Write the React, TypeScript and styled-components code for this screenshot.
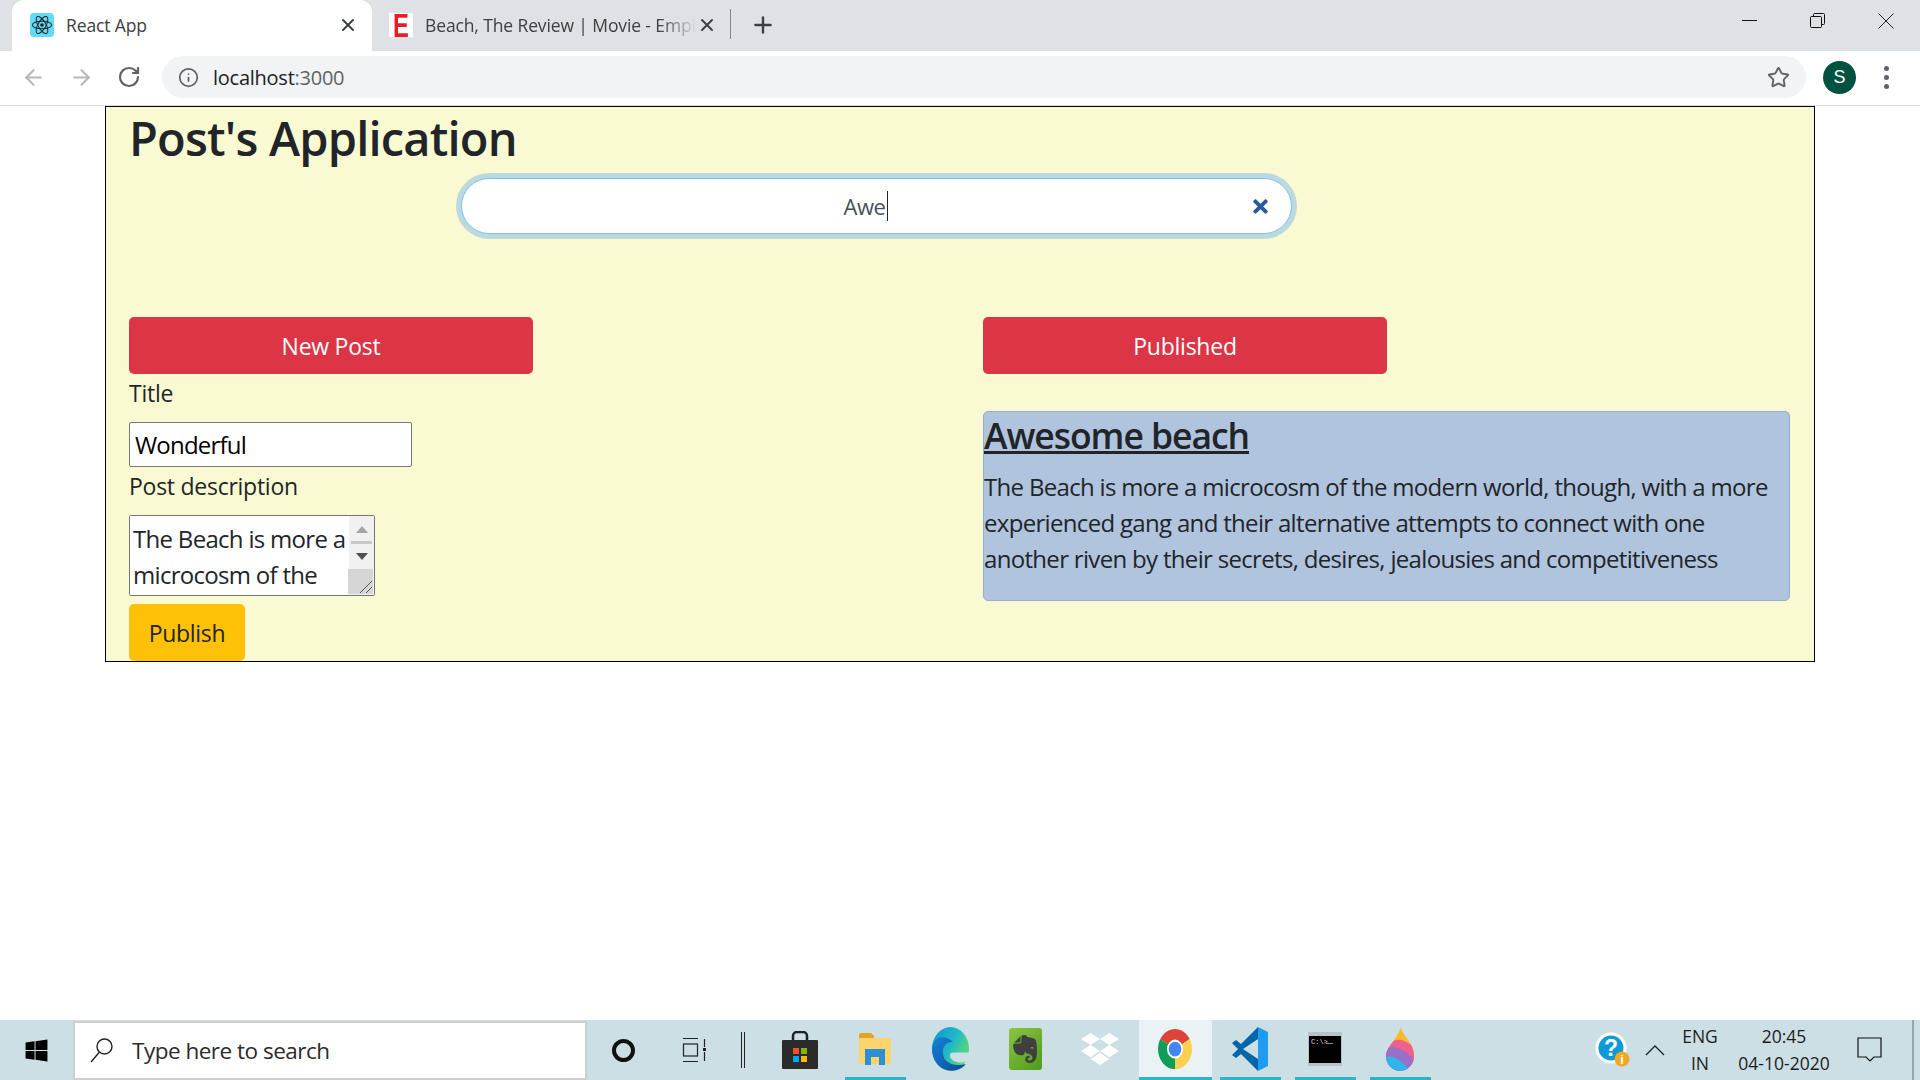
import React from "react";
import styled, {createGlobalStyle} from "styled-components";
import {ArrowLeft, ArrowRight, RotateCw, Info, Star, X, Plus} from "lucide-react";
import {FaWindows, FaTimes, FaDropbox, FaEvernote} from "react-icons/fa";

const GlobalStyle = createGlobalStyle`
  html, body {
    margin: 0;
    padding: 0;
    background: #fff;
    font-family: "Open Sans", "Noto Sans", sans-serif;
    color: #212529;
  }
  * {
    box-sizing: border-box;
  }
`;

const Screen = styled.div`
  width: 1920px;
  height: 1080px;
  display: flex;
  flex-direction: column;
  overflow: hidden;
`;

/* browser chrome */
const TabStrip = styled.div`
  height: 51px;
  flex: none;
  background: #dee1e6;
  display: flex;
  align-items: stretch;
  padding-left: 12px;
`;

const ActiveTab = styled.div`
  width: 360px;
  background: #fff;
  border-radius: 12px 12px 0 0;
  display: flex;
  align-items: center;
  padding: 0 14px 2px 18px;
`;

const BackTab = styled.div`
  width: 358px;
  display: flex;
  align-items: center;
  padding: 0 13px 2px 17px;
`;

const ReactFavicon = styled.div`
  width: 24px;
  height: 24px;
  flex: none;
  border-radius: 4px;
  background: #61dafb;
  display: flex;
  align-items: center;
  justify-content: center;
`;

const EmpireFavicon = styled.div`
  width: 24px;
  height: 24px;
  flex: none;
  background: #fff;
  color: #ed1c24;
  font: 700 33px/25px "Liberation Sans", sans-serif;
  text-align: center;

  span {
    display: block;
    transform: scaleX(0.72);
  }
`;

const TabTitle = styled.div<{$fade?: boolean}>`
  flex: 1;
  min-width: 0;
  margin-left: 12px;
  font-size: 17.500px;
  letter-spacing: -0.12px;
  white-space: nowrap;
  overflow: hidden;
  color: #3c4043;
  ${p => p.$fade && `mask-image: linear-gradient(to right, #000 86%, transparent 100%);`}
`;

const TabClose = styled(X)`
  flex: none;
  color: #3c4043;
`;

const TabDivider = styled.div`
  width: 1px;
  height: 30px;
  margin: 9px 0 0 0;
  background: #80868b;
`;

const NewTab = styled.div`
  width: 64px;
  display: flex;
  align-items: center;
  justify-content: center;
  color: #3c4043;
  padding-bottom: 2px;
`;

const WindowControls = styled.div`
  margin-left: auto;
  display: flex;
`;

const WindowButton = styled.div`
  width: 68px;
  display: flex;
  align-items: flex-start;
  justify-content: center;
  padding-top: 13px;
`;

const Toolbar = styled.div`
  height: 55px;
  flex: none;
  background: #fff;
  border-bottom: 1px solid #dadce0;
  display: flex;
  align-items: center;
  padding: 0 0 2px 9px;
`;

const NavButton = styled.div<{$dim?: boolean}>`
  width: 48px;
  display: flex;
  justify-content: center;
  color: ${p => (p.$dim ? "#b5b8bc" : "#5f6368")};
`;

const AddressBar = styled.div`
  width: 1644px;
  height: 42px;
  margin-left: 9px;
  border-radius: 21px;
  background: #f1f3f4;
  display: flex;
  align-items: center;
  padding: 0 16px 0 16px;
  color: #5f6368;
`;

const Url = styled.span`
  margin-left: 14px;
  font-size: 20px;
  letter-spacing: -0.25px;
  color: #202124;

  span {
    color: #5f6368;
  }
`;

const StarIcon = styled(Star)`
  margin-left: auto;
`;

const Avatar = styled.div`
  width: 33px;
  height: 33px;
  margin-left: 17px;
  border-radius: 50%;
  background: #00513f;
  color: #fff;
  font: 18px/33px "Liberation Sans", sans-serif;
  text-align: center;
`;

const MenuDots = styled.div`
  margin-left: 28px;
  display: flex;
  flex-direction: column;
  gap: 4px;

  i {
    width: 5px;
    height: 5px;
    border-radius: 50%;
    background: #5f6368;
  }
`;

/* the page itself */
const Main = styled.main`
  flex: 1;
  min-height: 0;
  padding: 0 105px;
`;

const AppBox = styled.div`
  height: 556px;
  background: #fafad2;
  border: 1px solid #000;
  padding: 0 19px 0 23px;
`;

const Heading = styled.h1`
  margin: 0;
  padding-top: 2px;
  font-size: 47px;
  line-height: 59px;
  font-weight: 600;
  letter-spacing: -0.8px;
`;

const SearchBox = styled.div`
  width: 831px;
  height: 56px;
  margin: 10px 0 0 332px;
  padding: 0 20px 0 0;
  background: #fff;
  border: 1px solid #80bdff;
  border-radius: 28px;
  box-shadow: 0 0 0 5px rgba(0, 123, 255, 0.25);
  display: flex;
  align-items: center;
`;

const SearchValue = styled.div`
  flex: 1;
  text-align: center;
  padding-left: 19px;
  font-size: 22px;
  letter-spacing: -0.4px;
  color: #495057;

  span {
    padding-right: 1px;
    border-right: 1px solid #212529;
  }
`;

const ClearIcon = styled(FaTimes)`
  color: #2a5a9b;
  font-size: 21px;
`;

const Columns = styled.div`
  display: grid;
  grid-template-columns: 854px 807px;
  margin-top: 83px;
`;

const Column = styled.section`
  display: flex;
  flex-direction: column;
  align-items: flex-start;
`;

const SectionButton = styled.button`
  width: 404px;
  height: 57px;
  border: 0;
  border-radius: 5px;
  background: #dc3545;
  color: #fff;
  font: inherit;
  font-size: 23px;
  letter-spacing: -0.25px;
`;

const FieldLabel = styled.label`
  font-size: 23px;
  line-height: 36px;
  letter-spacing: -0.26px;
`;

const TitleLabel = styled(FieldLabel)`
  margin-top: 1px;
`;

const TitleInput = styled.input`
  width: 283px;
  height: 45px;
  margin-top: 11px;
  padding: 0 5px;
  border: 1px solid #767676;
  border-radius: 2px;
  background: #fff;
  color: #000;
  font: inherit;
  font-size: 24px;
  letter-spacing: -0.8px;
  outline: none;
`;

const DescLabel = styled(FieldLabel)`
  margin-top: 1px;
`;

const DescBox = styled.div`
  width: 246px;
  height: 81px;
  margin-top: 11px;
  border: 1px solid #767676;
  border-radius: 2px;
  background: #fff;
  display: flex;
  overflow: hidden;
`;

const DescText = styled.textarea`
  flex: 1;
  min-width: 0;
  padding: 5px 0 0 3px;
  border: 0;
  outline: none;
  resize: none;
  overflow: hidden;
  font: inherit;
  font-size: 24px;
  line-height: 36px;
  letter-spacing: -0.7px;
  color: #212529;
`;

const FakeScroll = styled.div`
  width: 25px;
  flex: none;
  background: #f1f1f1;
  display: flex;
  flex-direction: column;
  align-items: center;
  padding-top: 10px;
  position: relative;
`;

const ArrowUp = styled.i`
  border: 6px solid transparent;
  border-top: 0;
  border-bottom: 7px solid #a3a3a3;
`;

const ArrowDown = styled.i`
  margin-top: 9px;
  border: 6px solid transparent;
  border-bottom: 0;
  border-top: 7px solid #505050;
`;

const ScrollRail = styled.i`
  width: 21px;
  height: 3px;
  margin-top: 8px;
  background: #c8c8c8;
`;

const ResizeGrip = styled.div`
  position: absolute;
  right: 1px;
  bottom: 1px;
  width: 25px;
  height: 25px;
  background: #d6d6d6;
  display: flex;
  align-items: flex-end;
  justify-content: flex-end;
`;

const PublishButton = styled.button`
  width: 116px;
  height: 57px;
  margin-top: 8px;
  border: 0;
  border-radius: 5px;
  background: #ffc107;
  color: #212529;
  font: inherit;
  font-size: 23px;
  letter-spacing: -0.3px;
`;

const PostCard = styled.article`
  width: 807px;
  height: 190px;
  margin-top: 37px;
  border: 1px solid #98afcd;
  border-radius: 5px;
  background: #b0c4de;
`;

const PostTitle = styled.h2`
  margin: 0;
  font-size: 35.500px;
  line-height: 47px;
  font-weight: 600;
  letter-spacing: -1.05px;
  text-decoration: underline;
`;

const PostBody = styled.p`
  margin: 10px 0 0;
  font-size: 24px;
  line-height: 36px;
  letter-spacing: -0.68px;
`;

/* windows taskbar */
const Taskbar = styled.footer`
  height: 60px;
  flex: none;
  background: #cbdfe5;
  display: flex;
  align-items: stretch;
`;

const StartSlot = styled.div`
  width: 73px;
  display: flex;
  align-items: center;
  justify-content: center;
  font-size: 25px;
  color: #000;
`;

const SearchField = styled.div`
  width: 514px;
  margin-top: 1px;
  background: #fff;
  border: 2px solid #cfcfcf;
  display: flex;
  align-items: center;
  padding: 0 0 0 15px;
  font-size: 22.500px;
  letter-spacing: -0.5px;
  color: #2b2b2b;
`;

const SearchGlass = styled.svg`
  margin-right: 19px;
  flex: none;
`;

const Slot = styled.div<{$w: number}>`
  width: ${p => p.$w}px;
  flex: none;
  display: flex;
  align-items: center;
  justify-content: center;
`;

const CortanaRing = styled.div`
  width: 23px;
  height: 23px;
  border: 4px solid #111;
  border-radius: 50%;
`;

const DoubleRule = styled.div`
  width: 4px;
  height: 36px;
  border-left: 1px solid #222;
  border-right: 1px solid #222;
`;

const AppRow = styled.div`
  display: flex;
  gap: 14px;
`;

const AppSlot = styled.div<{$running?: boolean; $active?: boolean}>`
  width: ${p => (p.$active ? "73px" : "61px")};
  margin: ${p => (p.$active ? "0 -6px" : "0")};
  background: ${p => (p.$active ? "#e9f2f5" : "transparent")};
  border-bottom: 3px solid ${p => (p.$running ? "#29b3cc" : "transparent")};
  display: flex;
  align-items: center;
  justify-content: center;
  padding-right: 1px;
`;

const Evernote = styled.div`
  width: 33px;
  height: 42px;
  border-radius: 3px;
  background: linear-gradient(135deg, #8cc63f, #4f9a1e);
  display: flex;
  align-items: center;
  justify-content: center;
  color: #3f3f3f;
  font-size: 32px;
`;

const Tray = styled.div`
  margin-left: auto;
  display: flex;
  padding-right: 6px;
`;

const TrayText = styled.div`
  display: flex;
  flex-direction: column;
  align-items: center;
  justify-content: center;
  font-size: 17.500px;
  line-height: 27px;
  color: #1c1c1c;
`;

const TrayEdge = styled.div`
  width: 2px;
  background: #9aa5a9;
  margin-left: 15px;
`;

function ReactIcon() {
    return (
        <svg width="22" height="22" viewBox="-12 -12 24 24" fill="none" stroke="#222" strokeWidth="1.1">
            <circle r="2" fill="#222" stroke="none"/>
            <ellipse rx="10.5" ry="4.2"/>
            <ellipse rx="10.5" ry="4.2" transform="rotate(60)"/>
            <ellipse rx="10.5" ry="4.2" transform="rotate(120)"/>
        </svg>
    );
}

function MinimizeIcon() {
    return <svg width="16" height="16" viewBox="0 0 16 16"><path d="M0 7.5h15" stroke="#111" fill="none"/></svg>;
}

function RestoreIcon() {
    return (
        <svg width="16" height="16" viewBox="0 0 16 16" fill="none" stroke="#111">
            <rect x="0.5" y="3.5" width="11" height="11" rx="1"/>
            <path d="M3.5 3V1.5a1 1 0 0 1 1-1h9a1 1 0 0 1 1 1v9a1 1 0 0 1-1 1H12"/>
        </svg>
    );
}

function CloseIcon() {
    return <svg width="16" height="16" viewBox="0 0 16 16"><path d="M.5.5l15 15M15.5.5l-15 15" stroke="#222" fill="none"/></svg>;
}

function GripLines() {
    return <svg width="14" height="14" viewBox="0 0 14 14"><path d="M1 13L13 1M7 13l6-6" stroke="#555" fill="none"/></svg>;
}

function TaskViewIcon() {
    return (
        <svg width="27" height="26" viewBox="0 0 27 26" fill="none" stroke="#222" strokeWidth="1.2">
            <path d="M1 1.5h15M1 24.500h15"/>
            <rect x="1.5" y="7" width="14" height="12"/>
            <path d="M22.500 2v8M22.500 15v9"/>
            <rect x="21" y="11" width="3" height="3" fill="#222" stroke="none"/>
        </svg>
    );
}

function StoreIcon() {
    return (
        <svg width="36" height="38" viewBox="0 0 36 38">
            <path d="M11 9V5a4 4 0 0 1 4-4h6a4 4 0 0 1 4 4v4" fill="none" stroke="#222" strokeWidth="2.5"/>
            <rect x="0" y="9" width="36" height="29" rx="1" fill="#2b2b2b"/>
            <rect x="11" y="17" width="6" height="6" fill="#f25022"/>
            <rect x="19" y="17" width="6" height="6" fill="#7fba00"/>
            <rect x="11" y="25" width="6" height="6" fill="#00a4ef"/>
            <rect x="19" y="25" width="6" height="6" fill="#ffb900"/>
        </svg>
    );
}

function FilesIcon() {
    return (
        <svg width="32" height="32" viewBox="0 0 32 32">
            <path d="M0 2a2 2 0 0 1 2-2h10l3 3v3H0z" fill="#e0a526"/>
            <rect x="0" y="5" width="32" height="26" rx="2" fill="#fbd56b"/>
            <path d="M6 16h20v16h-6v-8h-8v8H6z" fill="#2d8fd5"/>
        </svg>
    );
}

function EdgeIcon() {
    return (
        <svg width="37" height="44" viewBox="0 0 37 44">
            <defs>
                <linearGradient id="edgeTop" x1="0" y1="0" x2="1" y2="0.6">
                    <stop offset="0" stopColor="#1a8fd0"/>
                    <stop offset="0.55" stopColor="#1fb8c8"/>
                    <stop offset="1" stopColor="#5fdc70"/>
                </linearGradient>
                <linearGradient id="edgeLow" x1="0" y1="0" x2="1" y2="1">
                    <stop offset="0" stopColor="#1382d6"/>
                    <stop offset="1" stopColor="#0b4c98"/>
                </linearGradient>
            </defs>
            <ellipse cx="18.500" cy="22" rx="18.500" ry="22" fill="url(#edgeTop)"/>
            <path d="M37 25.500H21c-3 0-4 3-2 6 3 4 10 5 15 3l3-2z" fill="#cbdfe5"/>
            <path d="M0 22C1 9 13 7 21 15c-7-1-11 5-10 12 1 9 11 13 23 10-5 6-12 8-19 6C6 41 0 32 0 22z" fill="url(#edgeLow)"/>
        </svg>
    );
}

function ChromeIcon() {
    return (
        <svg width="34" height="40" viewBox="0 0 34 40">
            <g transform="scale(1 1.18)">
                <path d="M17 17L2.300 8.500A17 17 0 0 1 31.700 8.500z" fill="#db4437"/>
                <path d="M17 17L31.700 8.500A17 17 0 0 1 17 34z" fill="#fcd04f"/>
                <path d="M17 17L17 34A17 17 0 0 1 2.300 8.500z" fill="#0f9d58"/>
                <circle cx="17" cy="17" r="8" fill="#fff"/>
                <circle cx="17" cy="17" r="6.300" fill="#4285f4"/>
            </g>
        </svg>
    );
}

function VscodeIcon() {
    return (
        <svg width="36" height="44" viewBox="0 0 36 44">
            <path d="M26 0l10 5v34l-10 5z" fill="#1f9cf0"/>
            <path d="M26 0v12L11 22l15 10v12L9 27l-5 4-4-3 6-6-6-6 4-3 5 4z" fill="#0065a9"/>
        </svg>
    );
}

function TerminalIcon() {
    return (
        <svg width="34" height="34" viewBox="0 0 34 34">
            <rect width="34" height="34" fill="#b9c2c6"/>
            <rect x="1" y="4" width="32" height="27" fill="#000"/>
            <text x="3" y="12" fontFamily="Liberation Mono" fontSize="7" fill="#ddd">C:\&gt;</text>
            <path d="M18 11.500h7" stroke="#888" fill="none"/>
        </svg>
    );
}

function PaintIcon() {
    return (
        <svg width="28" height="44" viewBox="0 0 28 44">
            <defs>
                <clipPath id="drop">
                    <path d="M15 0c1 9 13 15 13 29a14 15 0 0 1-28 0C0 20 10 14 15 0z"/>
                </clipPath>
            </defs>
            <g clipPath="url(#drop)">
                <rect width="28" height="44" fill="#fdb827"/>
                <path d="M0 22C8 8 18 12 28 20v24H0z" fill="#ef5f8f"/>
                <path d="M0 22C8 17 18 22 28 33v11H0z" fill="#9a6fc9"/>
                <path d="M0 30C8 28 16 34 24 44H0z" fill="#2fb4ec"/>
            </g>
        </svg>
    );
}

function HelpIcon() {
    return (
        <svg width="36" height="36" viewBox="0 0 36 36">
            <circle cx="16" cy="16" r="15.500" fill="#fff"/>
            <circle cx="16" cy="16" r="12.500" fill="#0d9ad8"/>
            <text x="16" y="24" textAnchor="middle" fontFamily="Liberation Sans" fontWeight="700" fontSize="23" fill="#fff">?</text>
            <circle cx="27" cy="27" r="7.500" fill="#f5a623"/>
            <text x="27" y="32" textAnchor="middle" fontFamily="Liberation Sans" fontWeight="700" fontSize="13" fill="#fff">i</text>
        </svg>
    );
}

function ChevronIcon() {
    return <svg width="20" height="11" viewBox="0 0 20 11"><path d="M1 10l9-9 9 9" stroke="#222" strokeWidth="1.300" fill="none"/></svg>;
}

function NotificationIcon() {
    return <svg width="26" height="26" viewBox="0 0 26 26"><path d="M1 1h23v19h-7l-4 4-4-4H1z" stroke="#111" strokeWidth="1.200" fill="none"/></svg>;
}

const description = "The Beach is more a microcosm of the modern world, though, with a more experienced gang and their alternative attempts to connect with one another riven by their secrets, desires, jealousies and competitiveness";

export default function App() {
    return (
        <Screen>
            <GlobalStyle/>
            <TabStrip>
                <ActiveTab>
                    <ReactFavicon><ReactIcon/></ReactFavicon>
                    <TabTitle>React App</TabTitle>
                    <TabClose size={20} strokeWidth={2.4}/>
                </ActiveTab>
                <BackTab>
                    <EmpireFavicon><span>E</span></EmpireFavicon>
                    <TabTitle $fade>Beach, The Review | Movie - Empire</TabTitle>
                    <TabClose size={20} strokeWidth={2.4}/>
                </BackTab>
                <TabDivider/>
                <NewTab><Plus size={26} strokeWidth={2.2}/></NewTab>
                <WindowControls>
                    <WindowButton><MinimizeIcon/></WindowButton>
                    <WindowButton><RestoreIcon/></WindowButton>
                    <WindowButton><CloseIcon/></WindowButton>
                </WindowControls>
            </TabStrip>
            <Toolbar>
                <NavButton $dim><ArrowLeft size={25}/></NavButton>
                <NavButton $dim><ArrowRight size={25}/></NavButton>
                <NavButton><RotateCw size={24} strokeWidth={2.2}/></NavButton>
                <AddressBar>
                    <Info size={21}/>
                    <Url>localhost<span>:3000</span></Url>
                    <StarIcon size={23}/>
                </AddressBar>
                <Avatar>S</Avatar>
                <MenuDots><i/><i/><i/></MenuDots>
            </Toolbar>
            <Main>
                <AppBox>
                    <Heading>Post's Application</Heading>
                    <SearchBox>
                        <SearchValue><span>Awe</span></SearchValue>
                        <ClearIcon/>
                    </SearchBox>
                    <Columns>
                        <Column>
                            <SectionButton>New Post</SectionButton>
                            <TitleLabel>Title</TitleLabel>
                            <TitleInput readOnly value="Wonderful"/>
                            <DescLabel>Post description</DescLabel>
                            <DescBox>
                                <DescText readOnly value={description}/>
                                <FakeScroll>
                                    <ArrowUp/>
                                    <ScrollRail/>
                                    <ArrowDown/>
                                    <ResizeGrip><GripLines/></ResizeGrip>
                                </FakeScroll>
                            </DescBox>
                            <PublishButton>Publish</PublishButton>
                        </Column>
                        <Column>
                            <SectionButton>Published</SectionButton>
                            <PostCard>
                                <PostTitle>Awesome beach</PostTitle>
                                <PostBody>{description}</PostBody>
                            </PostCard>
                        </Column>
                    </Columns>
                </AppBox>
            </Main>
            <Taskbar>
                <StartSlot><FaWindows/></StartSlot>
                <SearchField>
                    <SearchGlass width="23" height="25" viewBox="0 0 23 25" fill="none" stroke="#222" strokeWidth="1.4">
                        <ellipse cx="14.500" cy="8.500" rx="7.500" ry="7.500"/>
                        <path d="M9.500 14L1 24"/>
                    </SearchGlass>
                    Type here to search
                </SearchField>
                <Slot $w={73}><CortanaRing/></Slot>
                <Slot $w={70}><TaskViewIcon/></Slot>
                <Slot $w={25}><DoubleRule/></Slot>
                <Slot $w={90}><StoreIcon/></Slot>
                <AppRow>
                    <AppSlot $running><FilesIcon/></AppSlot>
                    <AppSlot><EdgeIcon/></AppSlot>
                    <AppSlot><Evernote><FaEvernote/></Evernote></AppSlot>
                    <AppSlot><FaDropbox color="#fff" size={38}/></AppSlot>
                    <AppSlot $running $active><ChromeIcon/></AppSlot>
                    <AppSlot $running><VscodeIcon/></AppSlot>
                    <AppSlot $running><TerminalIcon/></AppSlot>
                    <AppSlot $running><PaintIcon/></AppSlot>
                </AppRow>
                <Tray>
                    <Slot $w={44}><HelpIcon/></Slot>
                    <Slot $w={40}><ChevronIcon/></Slot>
                    <Slot $w={50}><TrayText><span>ENG</span><span>IN</span></TrayText></Slot>
                    <Slot $w={118}><TrayText><span>20:45</span><span>04-10-2020</span></TrayText></Slot>
                    <Slot $w={54}><NotificationIcon/></Slot>
                    <TrayEdge/>
                </Tray>
            </Taskbar>
        </Screen>
    );
}
